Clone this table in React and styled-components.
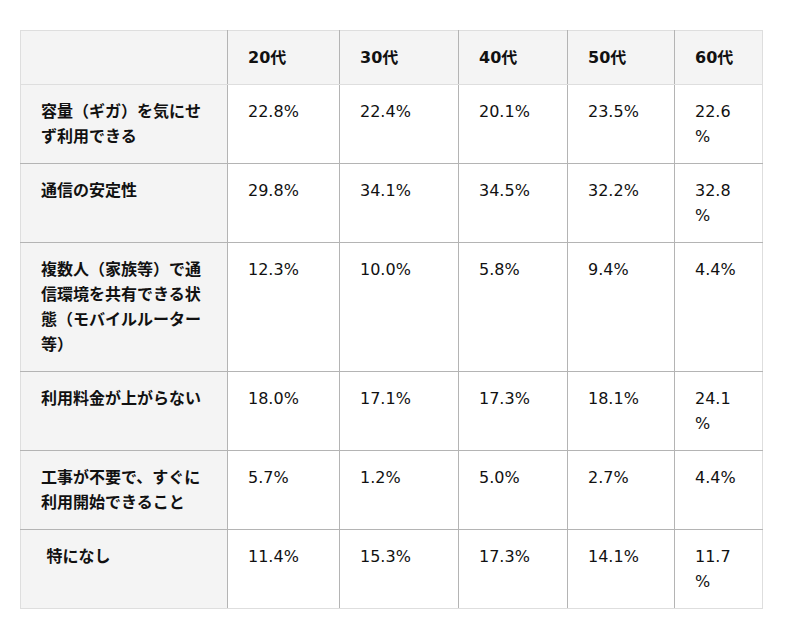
import styled, { createGlobalStyle } from 'styled-components';

const GlobalStyle = createGlobalStyle`
  body {
    margin: 0;
    background: #fff;
    font-family: "DejaVu Sans", "Noto Sans CJK JP", sans-serif;
  }
`;

const Wrap = styled.div`
  padding: 30px 38px 30px 20px;
`;

const Table = styled.table`
  width: 742px;
  table-layout: fixed;
  border-collapse: collapse;
  border: 1px solid #dedede;
  font-size: 16px;
  line-height: 25px;
  color: #111;
`;

const Cell = styled.td`
  padding: 14px 20px;
  vertical-align: top;
  text-align: left;
  border: 1px solid #b4b4b4;
  background: ${(props) => (props.shaded ? '#f4f4f4' : '#fff')};
  font-weight: ${(props) => (props.bold ? 700 : 400)};
  overflow-wrap: anywhere;
  tr:first-child > & {
    border-top-color: #dedede;
  }
  tr:last-child > & {
    border-bottom-color: #dedede;
  }
  &:first-child {
    border-left-color: #dedede;
  }
  &:last-child {
    border-right-color: #dedede;
  }
`;

const widths = [207, 112, 119, 109, 107, 88];
const ages = ['20代', '30代', '40代', '50代', '60代'];

const rows = [
  ['容量（ギガ）を気にせず利用できる', '22.8%', '22.4%', '20.1%', '23.5%', '22.6%'],
  ['通信の安定性', '29.8%', '34.1%', '34.5%', '32.2%', '32.8%'],
  ['複数人（家族等）で通信環境を共有できる状態（モバイルルーター等）', '12.3%', '10.0%', '5.8%', '9.4%', '4.4%'],
  ['利用料金が上がらない', '18.0%', '17.1%', '17.3%', '18.1%', '24.1%'],
  ['工事が不要で、すぐに利用開始できること', '5.7%', '1.2%', '5.0%', '2.7%', '4.4%'],
  ['\u00a0特になし', '11.4%', '15.3%', '17.3%', '14.1%', '11.7%'],
];

const App = () => {
  return (
    <Wrap>
      <GlobalStyle />
      <Table>
        <colgroup>
          {widths.map((w, i) => (
            <col key={i} style={{ width: w }} />
          ))}
        </colgroup>
        <thead>
          <tr>
            <Cell as="th" shaded />
            {ages.map((a) => (
              <Cell as="th" shaded bold key={a}>
                {a}
              </Cell>
            ))}
          </tr>
        </thead>
        <tbody>
          {rows.map((r) => (
            <tr key={r[0]}>
              <Cell shaded bold>{r[0]}</Cell>
              {r.slice(1).map((v, i) => (
                <Cell key={i}>{v}</Cell>
              ))}
            </tr>
          ))}
        </tbody>
      </Table>
    </Wrap>
  );
};

export default App;
